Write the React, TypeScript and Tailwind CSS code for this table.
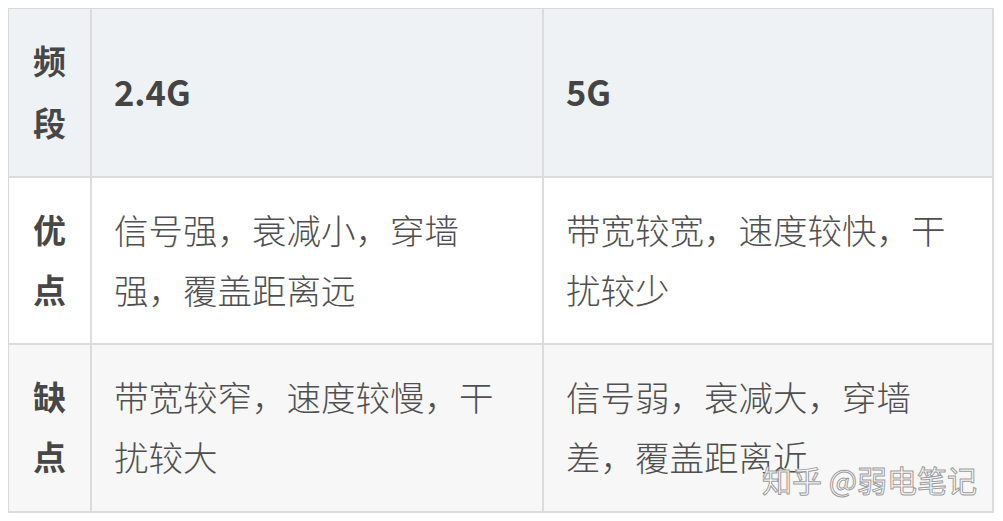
import React from 'react';

type Row = {
  label: string[];
  cells: string[][];
  bg: string;
  head?: boolean;
  h: string;
};

const ROWS: Row[] = [
  { label: ['频', '段'], cells: [['2.4G'], ['5G']], bg: 'bg-[#eff2f5]', head: true, h: 'h-[169px]' },
  {
    label: ['优', '点'],
    cells: [
      ['信号强，衰减小，穿墙', '强，覆盖距离远'],
      ['带宽较宽，速度较快，干', '扰较少'],
    ],
    bg: 'bg-white',
    h: 'h-[167px]',
  },
  {
    label: ['缺', '点'],
    cells: [
      ['带宽较窄，速度较慢，干', '扰较大'],
      ['信号弱，衰减大，穿墙', '差，覆盖距离近'],
    ],
    bg: 'bg-[#f7f7f7]',
    h: 'h-[168px]',
  },
];

const App: React.FC = () => {
  return (
    <div className="relative w-[1003px] h-[521px] bg-white pt-2 pl-2 font-['Noto_Sans_CJK_SC','Noto_Sans',sans-serif] text-[#4f4f4f] overflow-hidden">
      <div className="w-[986px] border-l border-t border-[#d8d8d8]">
        {ROWS.map((row, i) => (
          <div key={i} className={`grid grid-cols-[83px_452px_450px] ${row.h} ${row.bg}`}>
            {/* label column */}
            <div className="flex flex-col items-center justify-center pb-1 border-r-2 border-b-2 border-[#dcdcdc] font-bold text-[33px] text-[#474747]">
              {row.label.map((c) => (
                <div key={c} className={row.head ? 'leading-[62px]' : 'leading-[60px]'}>{c}</div>
              ))}
            </div>
            {row.cells.map((lines, j) => (
              <div
                key={j}
                className={`flex flex-col justify-center pb-1 pl-[22px] border-r-2 border-b-2 border-[#dcdcdc] text-[34.5px] ${
                  row.head ? 'font-bold text-[#444]' : 'font-light'
                }`}
              >
                {lines.map((l) => (
                  <div key={l} className="leading-[60px] whitespace-nowrap">{l}</div>
                ))}
              </div>
            ))}
          </div>
        ))}
      </div>

      {/* watermark */}
      <div className="absolute left-[762px] top-[461px] text-[30px] leading-[36px] text-white [-webkit-text-stroke:1px_#9c9c9c] whitespace-nowrap">
        知乎 @弱电笔记
      </div>
    </div>
  );
};

export default App;
